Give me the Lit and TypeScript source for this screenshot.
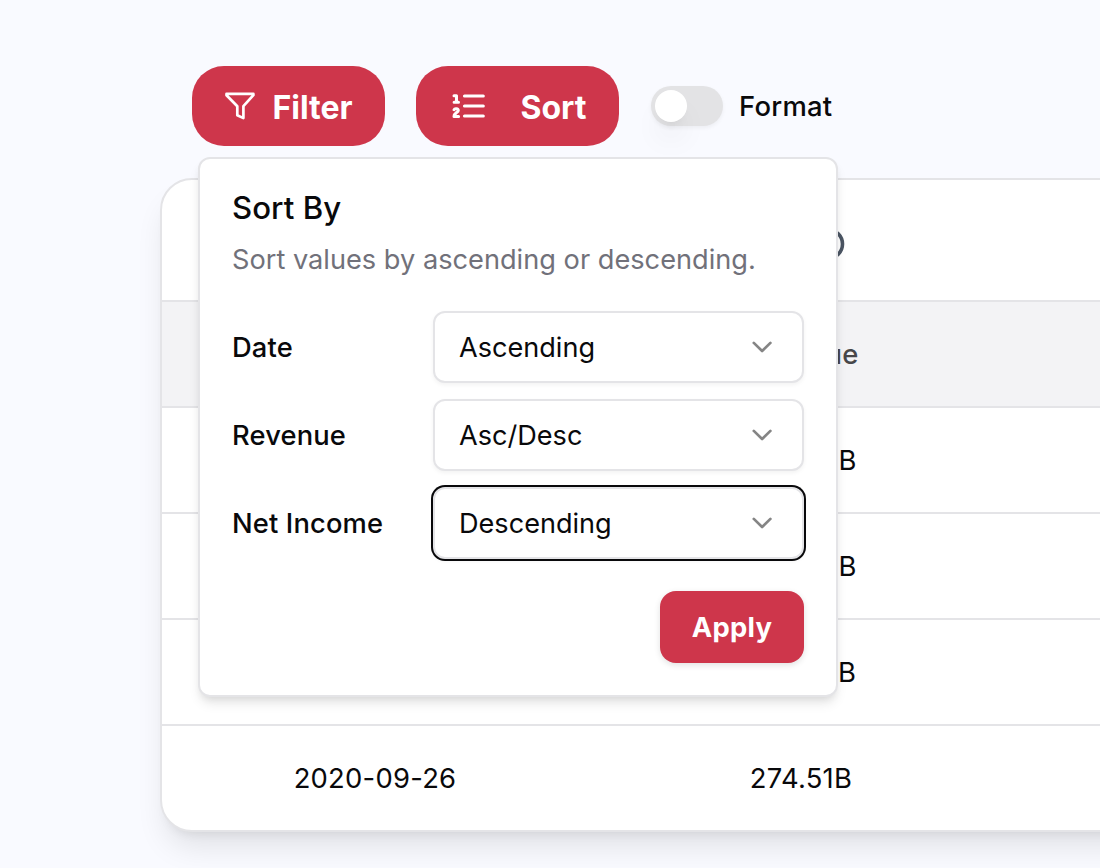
import { LitElement, html, css } from "lit";
import { customElement } from "lit/decorators.js";

const chevron = html`<svg class="chevron" width="30" height="30" viewBox="0 0 30 30" fill="none" stroke="#858585" stroke-width="2.7" stroke-linecap="round" stroke-linejoin="round"><path d="M5.8 10.9 14.1 19l8.3-8.1" /></svg>`;

@customElement("app-root")
export class AppRoot extends LitElement {
  static styles = css`
    :host {
      display: block;
      position: relative;
      width: 1100px;
      height: 868px;
      overflow: hidden;
      box-sizing: border-box;
      padding: 66px 0 0 160px;
      background: #f9faff;
      color: #09090b;
      font-family: Inter, "Liberation Sans", sans-serif;
      font-size: 28px;
      line-height: 40px;
      font-optical-sizing: none;
      -webkit-font-smoothing: antialiased;
    }
    * { box-sizing: border-box; }
    svg { display: block; flex: none; }
    button { font: inherit; border: 0; margin: 0; }
    .toolbar { display: flex; align-items: center; padding-left: 31.5px; height: 80px; }
    .pill {
      display: flex; align-items: center; height: 80px; border-radius: 32px;
      background: #ce364b; color: #fff; font-size: 32px; font-weight: 700; padding: 0 32px;
    }
    .pill span { padding-top: 3px; }
    .filter { width: 193px; gap: 17px; }
    .sort { width: 203px; margin-left: 31.5px; gap: 32.5px; }
    .switch {
      width: 72px; height: 40px; border-radius: 20px; background: #e3e3e5; padding: 4px;
      margin: 0 16px 0 32px; box-shadow: 0 2px 4px rgba(0, 0, 0, 0.05);
    }
    .thumb {
      width: 32px; height: 32px; border-radius: 50%; background: #fff;
      box-shadow: 0 20px 30px -6px rgba(0, 0, 0, 0.1), 0 8px 12px -8px rgba(0, 0, 0, 0.1);
    }
    .format { font-weight: 500; font-size: 27.4px; letter-spacing: 0.25px; padding-bottom: 1px; }
    .card {
      width: 1284px; height: 654px; margin-top: 32px; border: 2px solid #e4e4e7; border-radius: 32px;
      background: #fff; overflow: hidden;
      box-shadow: 0 20px 30px -6px rgba(0, 0, 0, 0.1), 0 8px 12px -8px rgba(0, 0, 0, 0.1);
    }
    .row {
      display: grid; grid-template-columns: 426px 426px 1fr; align-items: center; justify-items: center;
      height: 106px; border-bottom: 2px solid #e4e4e7; font-size: 27.4px; letter-spacing: 0.25px;
    }
    .tools { height: 122px; }
    .info { grid-column: 2; margin-left: 54px; margin-top: 8px; }
    .head { background: #f3f3f5; color: #47474a; font-weight: 500; }
    .row:last-child { border-bottom: 0; padding-bottom: 3px; }
    .popover {
      position: absolute; left: 198px; top: 157px; width: 640px; height: 540px;
      border: 2px solid #e4e4e7; border-radius: 12px; background: #fff; padding: 32px;
      box-shadow: 0 8px 12px -2px rgba(0, 0, 0, 0.1), 0 4px 8px -4px rgba(0, 0, 0, 0.1);
    }
    .title { font-size: 31.2px; font-weight: 500; line-height: 32px; padding-top: 0.5px; letter-spacing: 0.05px; }
    .desc { margin-top: 16.5px; font-size: 27.2px; line-height: 40px; color: #71717a; }
    .fields { display: grid; gap: 16px; margin-top: 31px; }
    .field { display: grid; grid-template-columns: 201px 1fr; align-items: center; }
    .label { font-weight: 500; font-size: 27.3px; letter-spacing: 0.15px; padding-top: 1px; }
    .select {
      display: flex; align-items: center; justify-content: space-between; height: 72px;
      border: 2px solid #e4e4e7; border-radius: 12px; padding: 0 24px; background: #fff;
      box-shadow: 0 2px 4px rgba(0, 0, 0, 0.05);
    }
    .value { font-size: 27.1px; padding-top: 1px; }
    .focused { box-shadow: 0 0 0 2px #09090b, 0 2px 4px rgba(0, 0, 0, 0.05); }
    .footer { display: flex; justify-content: flex-end; margin-top: 32px; }
    .apply {
      width: 144px; height: 72px; padding: 0; border-radius: 16px; background: #ce364b; color: #fff;
      font-weight: 700; font-size: 27.4px; letter-spacing: 0.3px; box-shadow: 0 2px 6px rgba(0, 0, 0, 0.12);
    }
  `;

  private fields = [
    { label: "Date", value: "Ascending", focused: false },
    { label: "Revenue", value: "Asc/Desc", focused: false },
    { label: "Net Income", value: "Descending", focused: true },
  ];

  private rows = [
    ["", "383.29B"],
    ["", "394.33B"],
    ["", "365.82B"],
    ["2020-09-26", "274.51B"],
  ];

  render() {
    return html`
      <div class="toolbar">
        <button class="pill filter">
          <svg width="32" height="32" viewBox="0 0 32 32" fill="none" stroke="#fff" stroke-width="2.7" stroke-linejoin="round"><path d="M2.5 3.9h26.9v1.3L19.4 16.2v11.9l-6.1-2.9v-9L2.5 5.2z" /></svg>
          <span>Filter</span>
        </button>
        <button class="pill sort">
          <svg width="40" height="40" viewBox="0 0 40 40" fill="none" stroke="#fff" stroke-width="3.1" stroke-linecap="round" stroke-linejoin="round">
            <path d="M16.5 10h18.8M16.5 20h18.8M16.5 30h18.8" />
            <path stroke-width="3" d="M6 9.7h2.5v6.4M6.1 16.2h4.4M6 23.7c.6-1.5 4.3-1.4 4.3.7 0 2-4.3 2.6-4.3 6h4.6" />
          </svg>
          <span>Sort</span>
        </button>
        <div class="switch"><div class="thumb"></div></div>
        <span class="format">Format</span>
      </div>
      <div class="card">
        <div class="row tools">
          <svg class="info" width="34" height="34" viewBox="0 0 34 34" fill="none" stroke="#4b5563" stroke-width="3.6"><circle cx="17" cy="17" r="14.5" /></svg>
        </div>
        <div class="row head"><span></span><span>Revenue</span></div>
        ${this.rows.map((r) => html`<div class="row"><span>${r[0]}</span><span>${r[1]}</span></div>`)}
      </div>
      <div class="popover">
        <div class="title">Sort By</div>
        <div class="desc">Sort values by ascending or descending.</div>
        <div class="fields">
          ${this.fields.map(
            (f) => html`<div class="field">
              <span class="label">${f.label}</span>
              <div class="select ${f.focused ? "focused" : ""}"><span class="value">${f.value}</span>${chevron}</div>
            </div>`
          )}
        </div>
        <div class="footer"><button class="apply">Apply</button></div>
      </div>
    `;
  }
}
